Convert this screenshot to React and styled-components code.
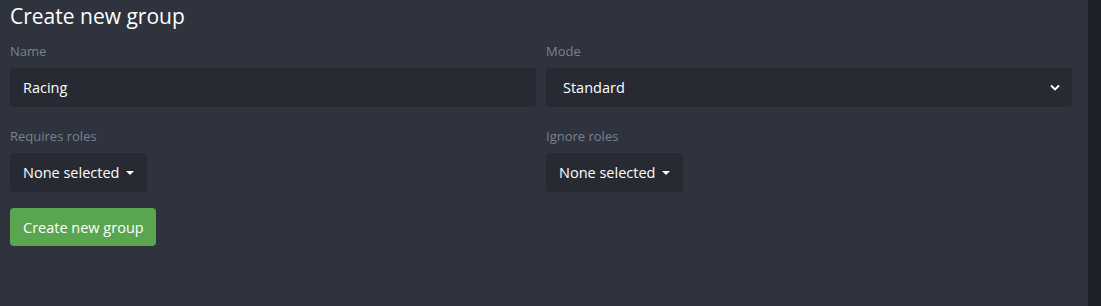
import React from 'react';
import styled, { createGlobalStyle } from 'styled-components';

const GlobalStyle = createGlobalStyle`
  html, body {
    margin: 0;
    padding: 0;
    background-color: #2e333d;
    font-family: "Open Sans", "Noto Sans", sans-serif;
  }
`;

const Page = styled.div`
  display: flex;
  height: 306px;
  background-color: #2e333d;
`;

const Main = styled.div`
  flex: 1;
  padding: 0 16px 0 10px;
`;

const Scrollbar = styled.div`
  width: 13px;
  background-color: #1e2027;
`;

const Title = styled.h3`
  margin: 0 0 12px 0;
  padding-top: 2px;
  font-size: 21px;
  font-weight: 400;
  line-height: 28px;
  color: #ffffff;
`;

const Row = styled.div`
  display: grid;
  grid-template-columns: 1fr 1fr;
  column-gap: 10px;
  margin-bottom: ${(p) => p.gap || 20}px;
`;

const Field = styled.div`
  display: flex;
  flex-direction: column;
  align-items: flex-start;
`;

const Label = styled.label`
  font-size: 13px;
  line-height: 18px;
  color: #7a818f;
  margin-bottom: 8px;
`;

const Input = styled.input`
  box-sizing: border-box;
  width: 100%;
  height: 39px;
  padding: 0 13px;
  border: none;
  border-radius: 4px;
  background-color: #272a33;
  color: #ffffff;
  font-family: inherit;
  font-size: 14.5px;
  outline: none;
`;

const SelectBox = styled.div`
  box-sizing: border-box;
  width: 100%;
  height: 39px;
  padding: 0 12px 0 17px;
  border-radius: 4px;
  background-color: #272a33;
  color: #ffffff;
  font-size: 14.5px;
  display: flex;
  align-items: center;
  justify-content: space-between;
`;

const DropButton = styled.button`
  box-sizing: border-box;
  height: 39px;
  padding: 0 13px;
  border: none;
  border-radius: 4px;
  background-color: #272a33;
  color: #ffffff;
  font-family: inherit;
  font-size: 14.5px;
  display: flex;
  align-items: center;
  gap: 7px;
`;

const Caret = styled.span`
  width: 0;
  height: 0;
  border-left: 4px solid transparent;
  border-right: 4px solid transparent;
  border-top: 4px solid #ffffff;
`;

const SubmitButton = styled.button`
  box-sizing: border-box;
  height: 38px;
  padding: 0 12px 0 13px;
  border: none;
  border-radius: 4px;
  background-color: #5aa550;
  color: #ffffff;
  font-family: inherit;
  font-size: 14.5px;
`;

const Chevron = () => (
  <svg width="10" height="7" viewBox="0 0 10 7">
    <path d="M1 1.5 L5 5.5 L9 1.5" fill="none" stroke="#ffffff" strokeWidth="1.8" />
  </svg>
);

const App = () => {
  return (
    <>
      <GlobalStyle />
      <Page>
        <Main>
          <Title>Create new group</Title>
          <Row>
            <Field>
              <Label>Name</Label>
              <Input type="text" defaultValue="Racing" />
            </Field>
            <Field>
              <Label>Mode</Label>
              <SelectBox>
                <span>Standard</span>
                <Chevron />
              </SelectBox>
            </Field>
          </Row>
          <Row gap={16}>
            <Field>
              <Label>Requires roles</Label>
              <DropButton>
                None selected <Caret />
              </DropButton>
            </Field>
            <Field>
              <Label>Ignore roles</Label>
              <DropButton>
                None selected <Caret />
              </DropButton>
            </Field>
          </Row>
          <SubmitButton>Create new group</SubmitButton>
        </Main>
        <Scrollbar />
      </Page>
    </>
  );
};

export default App;
